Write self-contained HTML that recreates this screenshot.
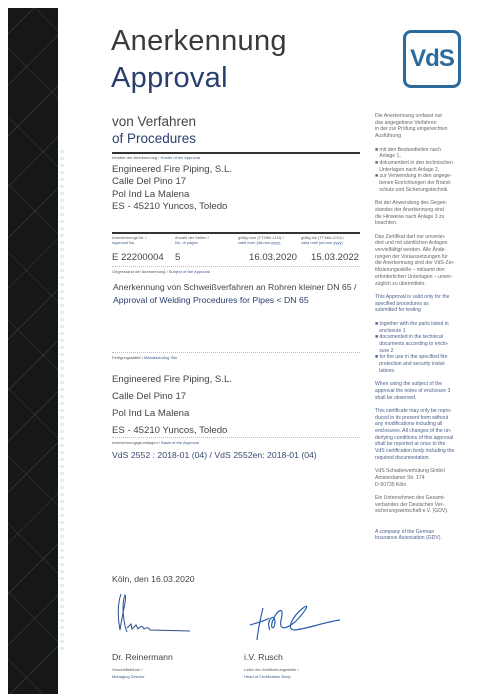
<!DOCTYPE html>
<html><head><meta charset="utf-8"><style>
*{margin:0;padding:0;box-sizing:border-box}
body{width:487px;height:694px;background:#fff;position:relative;overflow:hidden;font-family:"Liberation Sans",sans-serif;color:#333}
.a{position:absolute;white-space:nowrap}
.lbl{font-size:4px;color:#555;line-height:5px}
.lb{color:#3a5a8a}
.t{font-size:9.6px;color:#444}
.r{position:absolute;left:375px;font-size:5.1px;line-height:6.7px;color:#666;white-space:nowrap}
.rb{color:#4a5f8a}
.hl{position:absolute;left:112px;width:248px;background:#333}
</style></head><body>
<div class="a" style="left:8px;top:8px;width:50px;height:686px;background:#161817"></div>
<div class="a" style="left:8px;top:8px;width:50px;height:686px;background:repeating-linear-gradient(135deg,transparent 0 18px,rgba(90,95,92,.35) 18px 19px,transparent 19px 36px);"></div>
<div class="a" style="left:8px;top:8px;width:50px;height:686px;background:repeating-linear-gradient(45deg,transparent 0 24px,rgba(90,95,92,.25) 24px 25px,transparent 25px 48px);"></div>
<div class="a" style="left:60px;top:150px;width:4px;height:500px;background:repeating-linear-gradient(#bfe3e8 0 3px,transparent 3px 7px);opacity:.5"></div>

<div class="a" style="left:111px;top:25px;font-size:29px;color:#3a3a3a;letter-spacing:.3px">Anerkennung</div>
<div class="a" style="left:111px;top:62px;font-size:29px;color:#2a3f6e;letter-spacing:.3px">Approval</div>
<div class="a" style="left:112px;top:114px;font-size:13.5px;color:#444">von Verfahren</div>
<div class="a" style="left:112px;top:131px;font-size:13.5px;color:#2a3f6e">of Procedures</div>

<div class="a" style="left:403px;top:30px;width:58px;height:58px;border:3px solid #2b6a9b;border-radius:8px;color:#2b6a9b;font-weight:bold;font-size:24px;text-align:center;line-height:52px;letter-spacing:-1px">VdS</div>

<div class="hl" style="top:152px;height:2px"></div>
<div class="a lbl" style="left:112px;top:155px">Inhaber der Anerkennung / <span class="lb">Holder of the Approval</span></div>
<div class="a t" style="left:112px;top:164px;line-height:12.3px">Engineered Fire Piping, S.L.<br>Calle Del Pino 17<br>Pol Ind La Malena<br>ES - 45210 Yuncos, Toledo</div>

<div class="hl" style="top:232px;height:2px"></div>
<div class="a lbl" style="left:112px;top:235px">Anerkennungs-Nr. /<br><span class="lb">Approval No.</span></div>
<div class="a lbl" style="left:175px;top:235px">Anzahl der Seiten /<br><span class="lb">No. of pages</span></div>
<div class="a lbl" style="left:238px;top:235px">gültig vom (TT.MM.JJJJ) /<br><span class="lb">valid from (dd.mm.yyyy)</span></div>
<div class="a lbl" style="left:301px;top:235px">gültig bis (TT.MM.JJJJ) /<br><span class="lb">valid until (dd.mm.yyyy)</span></div>
<div class="a t" style="left:112px;top:252px">E 22200004</div>
<div class="a t" style="left:175px;top:252px">5</div>
<div class="a t" style="left:249px;top:252px">16.03.2020</div>
<div class="a t" style="left:311px;top:252px">15.03.2022</div>
<div class="a" style="left:112px;top:266px;width:248px;border-top:1px dotted #bbb"></div>
<div class="a lbl" style="left:112px;top:269px">Gegenstand der Anerkennung / <span class="lb">Subject of the Approval</span></div>
<div class="a" style="left:113px;top:281px;font-size:8.7px;line-height:13px;color:#444">Anerkennung von Schweißverfahren an Rohren kleiner DN 65 /<br><span style="color:#2a3f6e">Approval of Welding Procedures for Pipes &lt; DN 65</span></div>

<div class="a" style="left:112px;top:352px;width:248px;border-top:1px dotted #bbb"></div>
<div class="a lbl" style="left:112px;top:355px">Fertigungsstätte / <span class="lb">Manufacturing Site</span></div>
<div class="a t" style="left:112px;top:371px;line-height:17px">Engineered Fire Piping, S.L.<br>Calle Del Pino 17<br>Pol Ind La Malena<br>ES - 45210 Yuncos, Toledo</div>
<div class="a" style="left:112px;top:437px;width:248px;border-top:1px dotted #bbb"></div>
<div class="a lbl" style="left:112px;top:440px">Anerkennungsgrundlagen / <span class="lb">Basis of the Approval</span></div>
<div class="a t" style="left:112px;top:450px;font-size:8.7px;color:#3a4a70">VdS 2552 : 2018-01 (04) / VdS 2552en: 2018-01 (04)</div>

<div class="a t" style="left:112px;top:574px;font-size:8.7px">Köln, den 16.03.2020</div>
<svg class="a" style="left:115px;top:590px" width="120" height="50" viewBox="0 0 120 50"><path d="M6 4 C2 15 3 30 5 40 C8 20 12 8 10 5 C6 15 9 35 12 42 M12 38 l4 -4 l1 5 l4 -4 l2 4 q4 -5 6 0 q4 -3 6 1 l40 1" fill="none" stroke="#2a4f8f" stroke-width="1"/></svg>
<svg class="a" style="left:245px;top:600px" width="100" height="45" viewBox="0 0 100 45"><path d="M12 40 C13 30 15 20 18 8 M5 25 C15 22 22 20 24 18 M25 30 C20 20 30 12 30 22 C30 30 24 30 28 20 C32 10 40 5 36 20 C34 30 40 30 50 22 C60 12 66 2 58 8 C48 16 40 30 50 30 C65 28 80 22 95 20" fill="none" stroke="#2a5fb0" stroke-width="1.2"/></svg>
<div class="a t" style="left:112px;top:652px;font-size:8.7px">Dr. Reinermann</div>
<div class="a t" style="left:244px;top:652px;font-size:8.7px">i.V. Rusch</div>
<div class="a lbl" style="left:112px;top:666px;line-height:7px">Geschäftsführer /<br><span class="lb">Managing Director</span></div>
<div class="a lbl" style="left:244px;top:666px;line-height:7px">Leiter der Zertifizierungsstelle /<br><span class="lb">Head of Certification Body</span></div>

<div class="r" style="top:113px">Die Anerkennung umfasst nur<br>das angegebene Verfahren<br>in der zur Prüfung eingereichten<br>Ausführung<br><br>■ mit den Bestandteilen nach<br>&nbsp;&nbsp;&nbsp;Anlage 1,<br>■ dokumentiert in den technischen<br>&nbsp;&nbsp;&nbsp;Unterlagen nach Anlage 2,<br>■ zur Verwendung in den angege-<br>&nbsp;&nbsp;&nbsp;benen Einrichtungen der Brand-<br>&nbsp;&nbsp;&nbsp;schutz-und Sicherungstechnik.<br><br>Bei der Anwendung des Gegen-<br>standes der Anerkennung sind<br>die Hinweise nach Anlage 3 zu<br>beachten.<br><br>Das Zertifikat darf nur unverän-<br>dert und mit sämtlichen Anlagen<br>vervielfältigt werden. Alle Ände-<br>rungen der Voraussetzungen für<br>die Anerkennung sind der VdS-Zer-<br>tifizierungsstelle – mitsamt den<br>erforderlichen Unterlagen – unver-<br>züglich zu übermitteln.<br><br><span class="rb">This Approval is valid only for the<br>specified procedures as<br>submitted for testing<br><br>■ together with the parts listed in<br>&nbsp;&nbsp;&nbsp;enclosure 1<br>■ documented in the technical<br>&nbsp;&nbsp;&nbsp;documents according to enclo-<br>&nbsp;&nbsp;&nbsp;sure 2<br>■ for the use in the specified fire<br>&nbsp;&nbsp;&nbsp;protection and security instal-<br>&nbsp;&nbsp;&nbsp;lations.<br><br>When using the subject of the<br>approval the notes of enclosure 3<br>shall be observed.<br><br>This certificate may only be repro-<br>duced in its present form without<br>any modifications including all<br>enclosures. All changes of the un-<br>derlying conditions of this approval<br>shall be reported at once to the<br>VdS certification body including the<br>required documentation.</span><br><br>VdS Schadenverhütung GmbH<br>Amsterdamer Str. 174<br>D-50735 Köln<br><br>Ein Unternehmen des Gesamt-<br>verbandes der Deutschen Ver-<br>sicherungswirtschaft e.V. (GDV).<br><br><br><span class="rb">A company of the German<br>Insurance Association (GDV).</span></div>
</body></html>
